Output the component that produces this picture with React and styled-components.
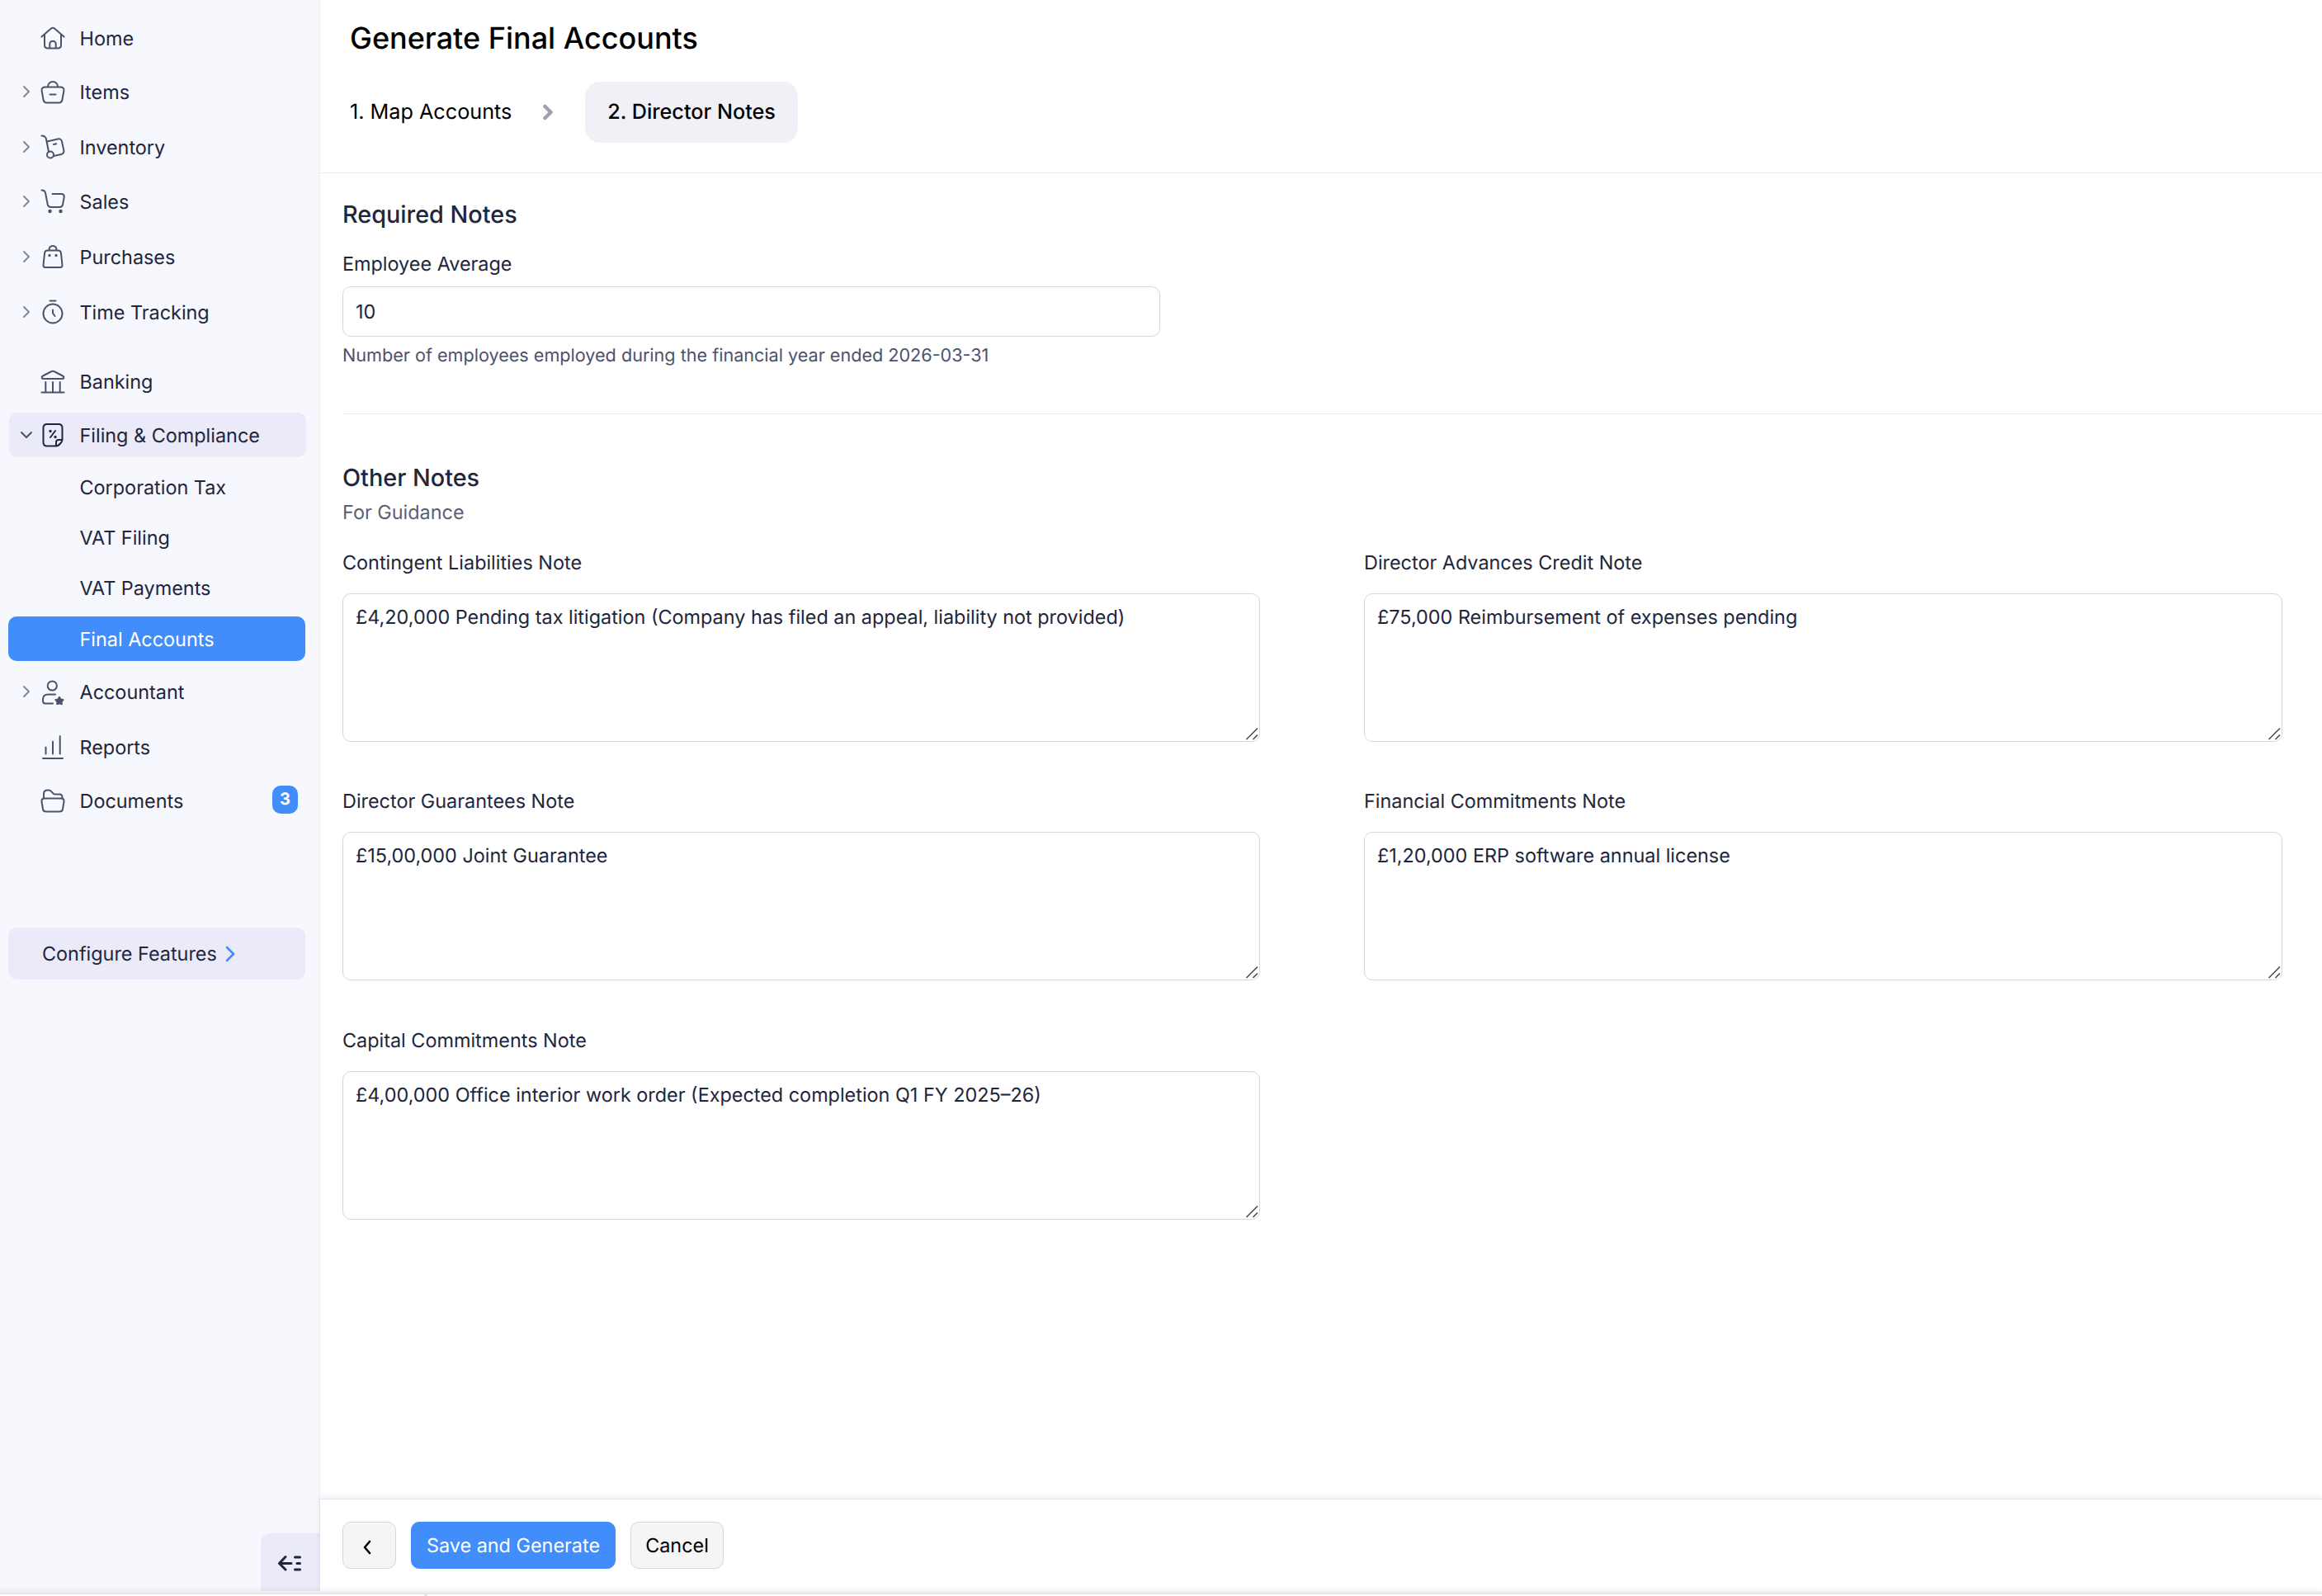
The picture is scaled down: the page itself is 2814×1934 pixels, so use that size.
import React from 'react';
import styled, { createGlobalStyle } from 'styled-components';

const Global = createGlobalStyle`
  * { box-sizing: border-box; }
  html, body { margin: 0; padding: 0; background: #fff; }
  body, input, textarea, button { font-family: Inter, "Noto Sans", sans-serif; text-rendering: geometricPrecision; }
`;

const Screen = styled.div`
  width: 2814px;
  height: 1934px;
  display: flex;
  flex-direction: column;
  overflow: hidden;
  background: #fff;
  color: #21263c;
`;
const Body = styled.div`
  height: 1928px;
  display: flex;
`;
const Sidebar = styled.aside`
  width: 388px;
  height: 100%;
  background: #f7f7fe;
  border-right: 1px solid #ebeaf6;
  display: flex;
  flex-direction: column;
  align-items: flex-start;
  padding: 19px 0 0 10px;
`;
const Item = styled.a`
  width: 360px;
  height: 54px;
  flex: none;
  margin-top: ${p => p.$gap || 0}px;
  border-radius: 10px;
  display: flex;
  align-items: center;
  font-size: 23.4px;
  color: ${p => (p.$active ? '#fff' : '#21263c')};
  background: ${p => (p.$active ? '#408dfb' : p.$open ? '#ebeaf9' : 'transparent')};
  margin-left: ${p => (p.$open ? 1 : 0)}px;
`;
const Arrow = styled.span`
  width: 32px;
  margin-left: ${p => (p.$open ? 5 : 6)}px;
  margin-right: -6px;
  display: flex;
  justify-content: center;
  color: ${p => (p.$open ? '#4c526c' : '#85899b')};
`;
const IconBox = styled.span`
  width: 32px;
  margin: 0 16.5px 0 6px;
  display: flex;
  color: ${p => (p.$open ? '#21263c' : '#4c526c')};
`;
const Badge = styled.span`
  margin-left: auto;
  margin-right: 9px;
  margin-top: -3px;
  width: 31px;
  height: 34px;
  border-radius: 10px;
  background: #408dfb;
  color: #fff;
  font-size: 20px;
  font-weight: 700;
  display: flex;
  align-items: center;
  justify-content: center;
  padding-bottom: 2px;
`;
const Configure = styled.a`
  width: 360px;
  height: 63px;
  margin-top: 127px;
  border-radius: 10px;
  background: #ebeaf9;
  display: flex;
  align-items: center;
  padding-left: 41px;
  gap: 9px;
  font-size: 23.4px;
`;
const Collapse = styled.button`
  margin-top: auto;
  align-self: flex-end;
  width: 71px;
  height: 70px;
  border: 0;
  border-radius: 12px 0 0 0;
  background: #ebeaf9;
  display: flex;
  align-items: center;
  justify-content: center;
  padding: 2px 2px 0 0;
`;
const Main = styled.main`
  flex: 1;
  min-width: 0;
  display: flex;
  flex-direction: column;
`;
const Header = styled.header`
  height: 210px;
  flex: none;
  border-bottom: 1px solid #ebeaf2;
  padding: 24px 0 0 36px;
  color: #000;
`;
const Title = styled.h1`
  margin: 0;
  font-size: 36px;
  line-height: 44px;
  font-weight: 500;
`;
const Steps = styled.nav`
  display: flex;
  align-items: center;
  margin-top: 31px;
  height: 74px;
  font-size: 25.2px;
`;
const StepName = styled.span`
  width: 195px;
  white-space: nowrap;
  padding-bottom: 1px;
`;
const StepArrow = styled.span`
  display: flex;
  margin: 0 38px;
`;
const CurrentStep = styled.span`
  height: 74px;
  width: 258px;
  border-radius: 18px;
  background: #f1f0f7;
  display: flex;
  align-items: center;
  justify-content: center;
  padding-bottom: 1px;
  font-weight: 500;
`;
const Content = styled.section`
  flex: 1;
  padding: 31px 0 0 27px;
`;
const SectionTitle = styled.h2`
  margin: 0;
  font-size: 28.8px;
  line-height: 38px;
  font-weight: 500;
`;
const Label = styled.label`
  display: block;
  font-size: 23.4px;
  line-height: 32px;
  margin-top: ${p => p.$top || 0}px;
`;
const Input = styled.input`
  display: block;
  width: 991px;
  height: 61px;
  margin-top: 11px;
  border: 1px solid #d7d5e2;
  border-radius: 10px;
  padding: 0 15px;
  font-size: 23.4px;
  color: #21263c;
  outline: none;
`;
const Help = styled.p`
  margin: 9px 0 0;
  font-size: 21.6px;
  line-height: 28px;
  color: #4c526c;
`;
const Divider = styled.hr`
  margin: 56px 0 58px;
  border: 0;
  height: 1px;
  background: #ebeaf2;
`;
const Guidance = styled.p`
  margin: 8px 0 0;
  font-size: 23.4px;
  line-height: 30px;
  color: #5a5f78;
`;
const Notes = styled.div`
  display: grid;
  grid-template-columns: 1112px 1113px;
  column-gap: 126px;
  row-gap: 57.4px;
  margin-top: 30px;
`;
const Field = styled.div`
  height: 232px;
`;
const Area = styled.textarea`
  display: block;
  width: 100%;
  height: 180px;
  margin-top: 21px;
  border: 1px solid #d7d5e2;
  border-radius: 10px;
  padding: 12px 15px;
  font-size: 23.4px;
  line-height: 32px;
  color: #21263c;
  resize: none;
  outline: none;
`;
const AreaWrap = styled.div`
  position: relative;
`;
const Grip = styled.svg`
  position: absolute;
  right: 2px;
  bottom: 1px;
`;
const Footer = styled.footer`
  height: 112px;
  flex: none;
  border-top: 1px solid #e6e5ee;
  box-shadow: 0 -2px 8px rgba(0, 0, 0, 0.08);
  padding: 27px 0 0 27px;
  display: flex;
  align-items: flex-start;
  gap: 18px;
`;
const Button = styled.button`
  width: ${p => p.$w}px;
  height: 57px;
  padding: ${p => (p.$back ? '5px 5px 0 0' : '0')};
  border: 1px solid ${p => (p.$primary ? '#408dfb' : '#d7d5e2')};
  border-radius: 10px;
  background: ${p => (p.$primary ? '#408dfb' : '#f5f5f5')};
  color: ${p => (p.$primary ? '#fff' : '#000')};
  font-size: 23.4px;
  display: flex;
  align-items: center;
  justify-content: center;
`;
const BottomEdge = styled.div`
  position: relative;
  height: 6px;
  padding: 4px 0 0 514px;
  background: linear-gradient(#f0f0f3 0 2px, #e3e3e8 2px 4px, #fff 4px);
  box-shadow: 0 -1px 6px rgba(0, 0, 0, 0.07);
`;
const Tick = styled.div`
  width: 4px;
  height: 2px;
  background: #e3e3e8;
`;

const Line = ({ children, w = 32, h = 32, sw = 2, box, ...rest }) => (
  <svg width={w} height={h} viewBox={box || `0 0 ${w} ${h}`} fill="none" stroke="currentColor"
    strokeWidth={sw} strokeLinecap="round" strokeLinejoin="round" {...rest}>{children}</svg>
);

const icons = {
  home: <><path d="M2.5 14.5 13.6 4.7q2.4-2 4.800 0L29.500 14.500" /><path d="M6 12v12.500q0 4 4 4h12q4 0 4-4V12" /><path d="M12.300 28v-4.600a3.700 3.700 0 0 1 7.400 0V28" /></>,
  items: <><path d="M7 10.500h18q5 0 4.400 4.500l-2 11q-.700 3.500-4 3.500H8.600q-3.300 0-4-3.500l-2-11Q2 10.500 7 10.500Z" /><path d="M10 10a6 6 0 0 1 12 0M12.500 19.500h7" /></>,
  inventory: <><path d="M2.500 2.500q4.500 0 5.500 4L11 22" /><path d="m9 9.500 13-3q4-1 5 3l2.300 10.500q.700 4-3 5L17 27" /><path d="m17 13 3.200-.700" /><circle cx="13" cy="25.500" r="4" /></>,
  sales: <><path d="M2.500 2.500q4 0 4.600 3.500l2.700 14q.700 3 4 3h10.500q3 0 3.700-3l1.700-9q.500-4-3.500-4H15.500" /><circle cx="12.500" cy="28" r="1.200" fill="currentColor" /><circle cx="25.500" cy="28" r="1.200" fill="currentColor" /></>,
  purchases: <><path d="M9.500 8.500h13q3 0 3.400 3l1.600 14.500q.200 3-2.500 3H7q-2.700 0-2.500-3l1.600-14.500q.400-3 3.400-3Z" /><path d="M11.500 8q0-5 4.500-5t4.500 5" /><circle cx="12" cy="14.500" r=".7" fill="currentColor" /><circle cx="20" cy="14.500" r=".7" fill="currentColor" /></>,
  time: <><circle cx="16" cy="18" r="11.500" /><path d="M12.500 2.500h7M16 13.500v4l2.500 3.500" /></>,
  banking: <><path d="M3 12.500q-1-2 1-3l9.500-5q2.500-1.300 5 0l9.500 5q2 1 1 3-.300.500-1 .500H4q-.700 0-1-.500ZM7.300 17v11.500M16 17v11.500M24.700 17v11.500M2.500 29.500h27" /></>,
  filing: <><path d="M20 29.500H9q-4.500 0-4.500-4.500V7.500Q4.500 3 9 3h14q4.500 0 4.500 4.500V22q0 2-2 4-3 3.500-5.500 3.500V25q0-3 3-3h4.500" /><path d="m19 11-6 8" /><circle cx="13" cy="11.500" r=".7" fill="currentColor" /><circle cx="19" cy="18.500" r=".7" fill="currentColor" /></>,
  accountant: <><circle cx="15.300" cy="9" r="5.600" /><path d="M19 19.500h-8.500q-6.500 0-6.500 6v1.500q0 3.500 3 3.500h9" /><path d="m24 22.800 1.500 2.700 3 .6-2 2.300.3 3-2.800-1.200-2.800 1.200.3-3-2-2.300 3-.6Z" fill="currentColor" /></>,
  reports: <path d="M4 30h24M7.500 16.500v8M16 9.500v15M24.700 3v21.500" />,
  documents: <><path d="M5 13V8q0-4.500 4.500-4.500h1.500q2 0 3.300 1.600L16 7q1 1.500 3 1.500h5q3.500 0 3.500 4V13" /><path d="M6 13.500h20q4 0 3.500 4L28 26.500q-.500 3-4 3H8q-3.500 0-4-3l-1.500-9q-.500-4 3.500-4Z" /></>,
};

const rows = [
  { icon: 'home', text: 'Home', gap: 0 },
  { icon: 'items', text: 'Items', gap: 11, arrow: true },
  { icon: 'inventory', text: 'Inventory', gap: 13, arrow: true },
  { icon: 'sales', text: 'Sales', gap: 12, arrow: true },
  { icon: 'purchases', text: 'Purchases', gap: 13, arrow: true },
  { icon: 'time', text: 'Time Tracking', gap: 13, arrow: true },
  { icon: 'banking', text: 'Banking', gap: 30 },
  { icon: 'filing', text: 'Filing & Compliance', gap: 11, open: true },
  { text: 'Corporation Tax', gap: 9 },
  { text: 'VAT Filing', gap: 7 },
  { text: 'VAT Payments', gap: 7 },
  { text: 'Final Accounts', gap: 8, active: true },
  { icon: 'accountant', text: 'Accountant', gap: 10, arrow: true },
  { icon: 'reports', text: 'Reports', gap: 13 },
  { icon: 'documents', text: 'Documents', gap: 11, badge: 3 },
];

const notes = [
  ['Contingent Liabilities Note', '£4,20,000 Pending tax litigation (Company has filed an appeal, liability not provided)'],
  ['Director Advances Credit Note', '£75,000 Reimbursement of expenses pending'],
  ['Director Guarantees Note', '£15,00,000 Joint Guarantee'],
  ['Financial Commitments Note', '£1,20,000 ERP software annual license'],
  ['Capital Commitments Note', '£4,00,000 Office interior work order (Expected completion Q1 FY 2025–26)'],
];

export default function App() {
  return (
    <Screen>
      <Global />
      <Body>
        <Sidebar>
          {rows.map(r => (
            <Item key={r.text} $gap={r.gap} $open={r.open} $active={r.active}>
              <Arrow $open={r.open}>
                {r.arrow && <Line w={10} h={16}><path d="m2 2 6 6-6 6" /></Line>}
                {r.open && <Line w={16} h={10}><path d="m2 2 6 6 6-6" /></Line>}
              </Arrow>
              <IconBox $open={r.open}>{r.icon && <Line>{icons[r.icon]}</Line>}</IconBox>
              {r.text}
              {r.badge && <Badge>{r.badge}</Badge>}
            </Item>
          ))}
          <Configure>
            Configure Features
            <Line w={14} h={22} sw={2.6} color="#408dfb"><path d="m3 3 8 8-8 8" /></Line>
          </Configure>
          <Collapse>
            <Line w={30} h={20} sw={3} color="#21263c"><path d="M10 2.500 2.500 10.500l7.500 7.500M3 10.500H17M21.500 3h6M24 10.500h3.500M21.500 18h6" /></Line>
          </Collapse>
        </Sidebar>
        <Main>
          <Header>
            <Title>Generate Final Accounts</Title>
            <Steps>
              <StepName>1. Map Accounts</StepName>
              <StepArrow><Line w={14} h={20} sw={4.5} color="#a09fab"><path d="m3.500 3 7 7-7 7" /></Line></StepArrow>
              <CurrentStep>2. Director Notes</CurrentStep>
            </Steps>
          </Header>
          <Content>
            <SectionTitle>Required Notes</SectionTitle>
            <Label $top={25}>Employee Average</Label>
            <Input defaultValue="10" />
            <Help>Number of employees employed during the financial year ended 2026-03-31</Help>
            <Divider />
            <SectionTitle>Other Notes</SectionTitle>
            <Guidance>For Guidance</Guidance>
            <Notes>
              {notes.map(([label, value]) => (
                <Field key={label}>
                  <Label>{label}</Label>
                  <AreaWrap>
                    <Area defaultValue={value} />
                    <Grip width="16" height="18" viewBox="0 0 16 18" fill="none" stroke="#4c4c55" strokeWidth="1.6">
                      <path d="M1.500 16 15 2.500M9.500 16l5.500-5.500" />
                    </Grip>
                  </AreaWrap>
                </Field>
              ))}
            </Notes>
          </Content>
          <Footer>
            <Button $w={65} $back><Line w={12} h={18} sw={2.6}><path d="M9 2 3 9l6 7" /></Line></Button>
            <Button $w={248} $primary>Save and Generate</Button>
            <Button $w={113}>Cancel</Button>
          </Footer>
        </Main>
      </Body>
      <BottomEdge><Tick /></BottomEdge>
    </Screen>
  );
}
